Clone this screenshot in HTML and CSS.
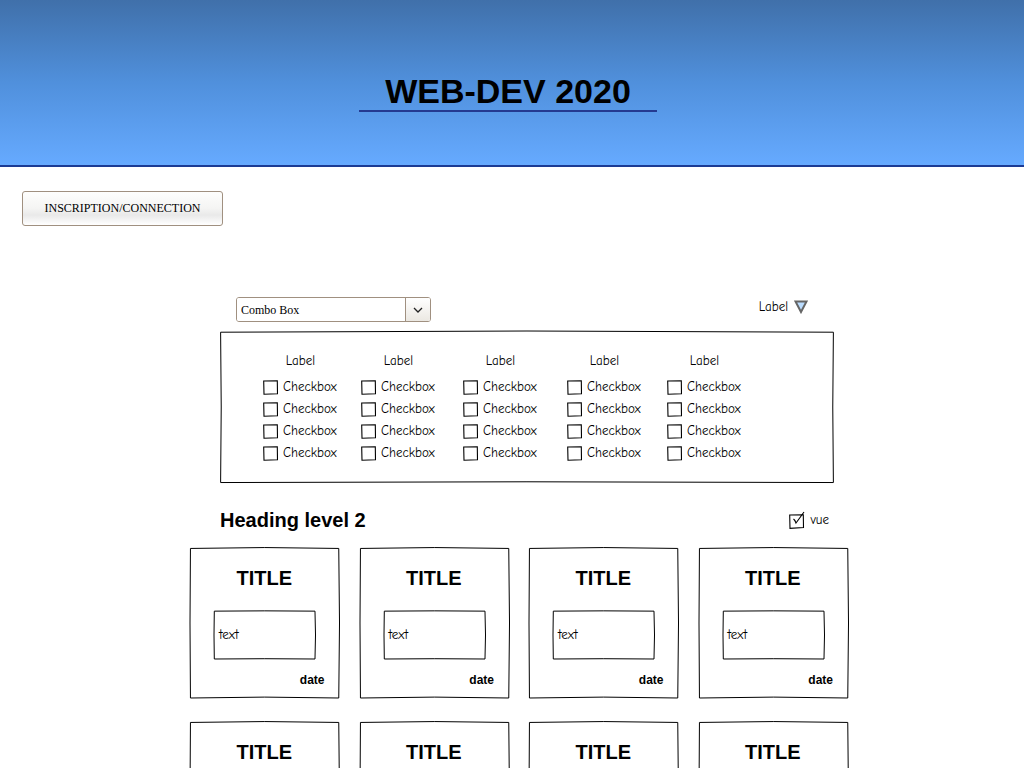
FILE: index.html
```html
<!DOCTYPE html>
<html lang="fr">
<head>
<meta charset="utf-8">
<meta name="viewport" content="width=device-width, initial-scale=1">
<title>WEB-DEV 2020</title>
<link rel="stylesheet" href="styles.css">
<script src="page.js" defer></script>
</head>
<body>
<header class="banner"><h1 class="banner-title">WEB-DEV 2020</h1></header>
<nav class="account"><button class="account-button" type="button">INSCRIPTION/CONNECTION</button></nav>
<main class="content">
  <div class="toolbar">
    <div class="combo">
      <select class="combo-select" aria-label="Combo Box"><option>Combo Box</option></select>
      <span class="combo-arrow"><svg width="10" height="6" viewBox="0 0 10 6"><path d="M1 1L5 5L9 1" fill="none" stroke="#222" stroke-width="1.3"/></svg></span>
    </div>
    <button class="sort" type="button">Label
      <svg width="14" height="14" viewBox="0 0 14 14"><path d="M1.5 1.5H12.5L7 12Z" fill="#bbddff" stroke="#666" stroke-width="2"/></svg>
    </button>
  </div>
  <section class="filters sketch" id="filters">
    <svg class="outline" viewBox="0 0 100 100" preserveAspectRatio="none"><path d="M.1 .8L50 0L99.9 .8L99.8 50L99.9 99.7L50 99.2L.1 99.7L.2 50Z"/></svg>
  </section>
  <div class="section-head">
    <h2 class="section-title">Heading level 2</h2>
    <label class="seen"><input class="tick" type="checkbox" checked><span>vue</span></label>
  </div>
  <section class="cards" id="cards"></section>
</main>
</body>
</html>
```
FILE: styles.css
```css
* { box-sizing: border-box; }
body {
  margin: 0;
  background: #fff;
  color: #000;
  font-family: "Comic Sans MS", "Comic Neue", "Lato", sans-serif;
  font-size: 13px;
  line-height: 16px;
}
h1, h2, h3, p { margin: 0; }
h1, h2, h3 { font-family: "Liberation Sans", Arial, sans-serif; font-weight: bold; }
button, select, input { color: inherit; font: inherit; margin: 0; }

.banner {
  display: flex;
  justify-content: center;
  padding: 72px 8px 53px 0;
  background: linear-gradient(#4070aa, #5090dc 50%, #66aaff);
  border-bottom: 2px solid #1c3b94;
}
.banner-title {
  padding: 0 26px;
  border-bottom: 2px solid #243a91;
  font-size: 34px;
  line-height: 38px;
}

.account { padding: 24px 22px 71px; }
.account-button {
  width: 201px;
  height: 35px;
  padding: 0 0 2px;
  border: 1px solid #a09080;
  border-radius: 3px;
  background: linear-gradient(#fefefd, #f4f4f3 50%, #e9e9e9 70%, #fff);
  font-family: "Liberation Serif", "Times New Roman", serif;
  font-size: 12px;
}

.content {
  box-sizing: content-box;
  max-width: 658px;
  margin: 0 auto;
  padding: 0 0 24px 14px;
}
.toolbar {
  display: flex;
  justify-content: space-between;
  align-items: flex-start;
  padding: 0 40px 0 46px;
}
.combo {
  display: grid;
  grid-template-columns: 1fr 25px;
  width: 195px;
  height: 25px;
  border: 1px solid #a09080;
  border-radius: 3px;
  overflow: hidden;
}
.combo-select {
  grid-area: 1 / 1 / 2 / 3;
  appearance: none;
  padding: 0 30px 0 4px;
  border: 0;
  background: #fff;
  font-family: "Liberation Serif", "Times New Roman", serif;
  font-size: 12px;
}
.combo-arrow {
  grid-area: 1 / 2;
  z-index: 1;
  display: grid;
  place-items: center;
  border-left: 1px solid #a09080;
  background: linear-gradient(#fff, #ebe8e2);
  pointer-events: none;
}
.sort {
  display: flex;
  align-items: center;
  gap: 6px;
  padding: 2px 0;
  border: 0;
  background: none;
}

.sketch { position: relative; }
.outline {
  position: absolute;
  inset: 0;
  width: 100%;
  height: 100%;
  overflow: visible;
  fill: none;
  stroke: #000;
  pointer-events: none;
}
.outline path { vector-effect: non-scaling-stroke; }

.filters {
  display: grid;
  grid-template-columns: 98px 102px 104px 100px 75px;
  margin: 9px 14px 0 30px;
  padding: 22px 43px;
}
.filter-group {
  display: flex;
  flex-direction: column;
  gap: 6px;
  width: 75px;
  min-width: 0;
  margin: 0;
  padding: 0;
  border: 0;
}
.filter-name { padding: 0 0 4px; text-align: center; }
.filter-row, .seen { display: flex; align-items: center; gap: 5px; white-space: nowrap; }
.tick {
  flex: none;
  appearance: none;
  width: 15px;
  height: 15px;
  background: url("data:image/svg+xml,%3Csvg xmlns='http://www.w3.org/2000/svg' viewBox='0 0 15 15'%3E%3Cpath d='M.7 1L14.3.7L14.5 13.7L1 14.3Z' fill='none' stroke='black' stroke-width='1.1'/%3E%3C/svg%3E") no-repeat;
}
.tick:checked {
  width: 16px;
  height: 18px;
  background-image: url("data:image/svg+xml,%3Csvg xmlns='http://www.w3.org/2000/svg' viewBox='0 0 16 18'%3E%3Cpath d='M.7 4L14.3 3.7L14.5 16.5L1 17.3ZM4.5 8Q6 9 7 12Q10 8 15 1' fill='none' stroke='black' stroke-width='1.1'/%3E%3C/svg%3E");
}

.section-head {
  display: flex;
  justify-content: space-between;
  align-items: center;
  padding: 25px 19px 16px 30px;
}
.section-title { font-size: 20px; line-height: 24px; }

.cards {
  display: grid;
  grid-template-columns: repeat(auto-fill, minmax(140px, 1fr));
  gap: 24px 20px;
}
.card { padding: 18px 15px 10px 24px; }
.card-title { padding-right: 10px; font-size: 20px; line-height: 24px; text-align: center; }
.card-text {
  display: flex;
  align-items: center;
  height: 48px;
  margin: 21px 9px 13px 0;
  padding: 0 5px;
}
.card-date {
  font-family: "Liberation Sans", Arial, sans-serif;
  font-size: 12px;
  font-weight: bold;
  text-align: right;
}
```
FILE: page.js
```js
const outline = '<svg class="outline" viewBox="0 0 100 100" preserveAspectRatio="none"><path d="M.3 .3L50 -.3L99.5 .3L100 50L99.5 100L50 99.4L.3 100L0 50Z"/></svg>';

const row = '<label class="filter-row"><input class="tick" type="checkbox"><span>Checkbox</span></label>';
const group = '<fieldset class="filter-group" aria-label="Label"><div class="filter-name">Label</div>' + row.repeat(4) + '</fieldset>';
document.getElementById('filters').insertAdjacentHTML('beforeend', group.repeat(5));

const card = '<article class="card sketch">' + outline +
  '<h3 class="card-title">TITLE</h3>' +
  '<div class="card-text sketch">' + outline + '<p>text</p></div>' +
  '<p class="card-date">date</p></article>';
document.getElementById('cards').innerHTML = card.repeat(8);
```
